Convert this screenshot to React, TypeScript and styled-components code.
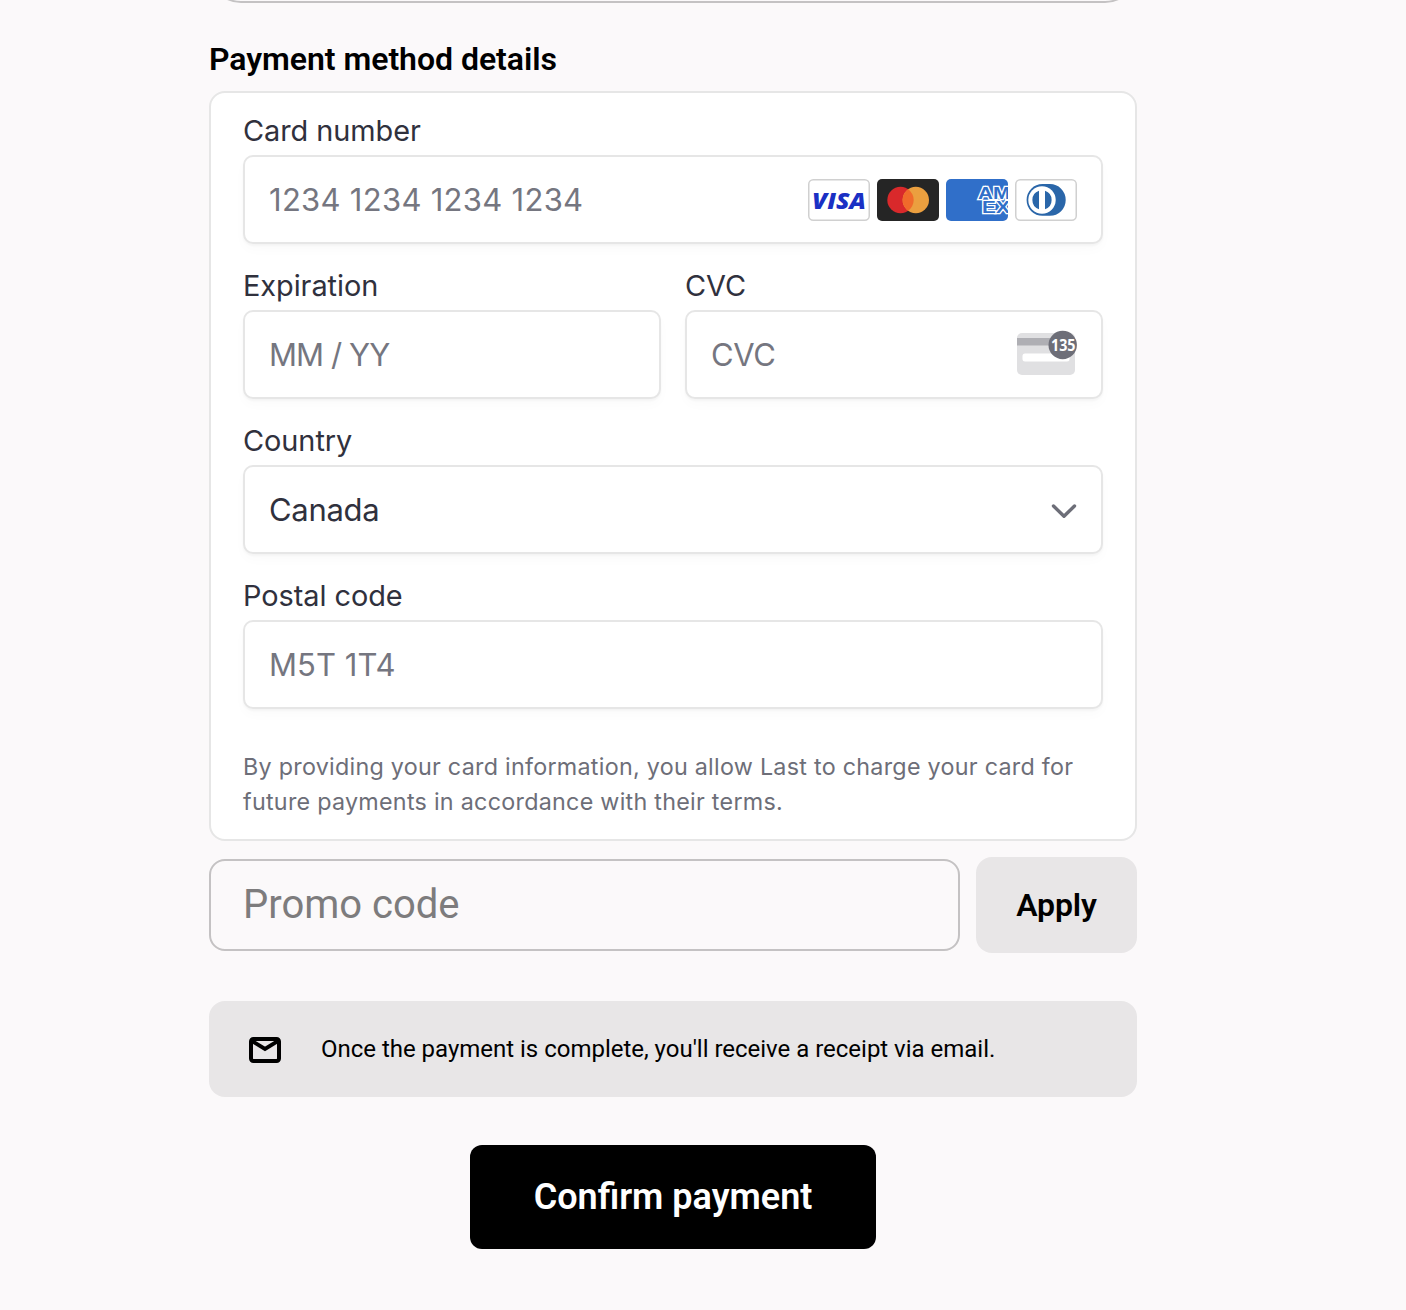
import React from "react";
import styled, { createGlobalStyle } from "styled-components";

const GlobalStyle = createGlobalStyle`
  *, *::before, *::after { box-sizing: border-box; }
  body {
    margin: 0;
    background: #fbf9fa;
    font-family: Roboto, "Liberation Sans", sans-serif;
    color: #000;
    overflow: hidden;
  }
`;

const Page = styled.main`
  width: 928px;
  margin-left: 209px;
  height: 1310px;
  display: flex;
  flex-direction: column;
`;

const PreviousField = styled.div`
  height: 3px;
  flex: none;
  display: flex;
  align-items: flex-end;
  overflow: hidden;
  &::after {
    content: "";
    flex: 1;
    height: 92px;
    border: 2px solid #c4c2c3;
    border-radius: 32px;
  }
`;

const Heading = styled.h2`
  margin: 37px 0 13px;
  font-size: 32px;
  line-height: 38px;
  font-weight: 600;
  letter-spacing: -0.04px;
  white-space: nowrap;
`;

const Card = styled.section`
  height: 750px;
  padding: 20px 32px 0;
  background: #fff;
  border: 2px solid #e6e6e6;
  border-radius: 16px;
  font-family: Inter, "Liberation Sans", sans-serif;
`;

const Rows = styled.div`
  display: flex;
  flex-direction: column;
  gap: 24px;
`;

const Columns = styled.div`
  display: grid;
  grid-template-columns: 1fr 1fr;
  gap: 24px;
`;

const Group = styled.div`
  display: flex;
  flex-direction: column;
`;

const Label = styled.label`
  height: 42px;
  line-height: 36px;
  font-size: 28.9px;
  letter-spacing: -0.05px;
  color: #30313d;
  white-space: nowrap;
`;

const Field = styled.div`
  height: 89px;
  display: flex;
  align-items: center;
  justify-content: space-between;
  padding: 0 24px;
  border: 2px solid #e6e6e6;
  border-radius: 10px;
  background: #fff;
  box-shadow: 0 2px 2px rgba(0, 0, 0, 0.03), 0 6px 12px rgba(0, 0, 0, 0.02);
`;

const Value = styled.span<{ $filled?: boolean; $spacing?: number }>`
  font-size: 31px;
  line-height: 40px;
  letter-spacing: ${(p) => p.$spacing ?? 0}px;
  color: ${(p) => (p.$filled ? "#30313d" : "#757680")};
  white-space: nowrap;
`;

const Brands = styled.div`
  display: flex;
  gap: 7px;
`;

const Terms = styled.p`
  margin: 40px 0 0;
  font-size: 23.3px;
  line-height: 35px;
  letter-spacing: 0.27px;
  color: #6d6e78;
  white-space: nowrap;
`;

const PromoRow = styled.div`
  margin-top: 16px;
  display: flex;
  align-items: center;
  gap: 16px;
`;

const PromoField = styled.div`
  width: 751px;
  height: 92px;
  padding: 0 32px 2px;
  display: flex;
  align-items: center;
  border: 2px solid #c4c2c3;
  border-radius: 16px;
  font-size: 40px;
  color: #7d7c7d;
`;

const ApplyButton = styled.button`
  width: 161px;
  height: 96px;
  border: 0;
  border-radius: 16px;
  background: #e8e6e7;
  font: 600 32px Roboto, sans-serif;
  letter-spacing: -0.1px;
  color: #000;
  padding: 0;
`;

const Notice = styled.div`
  margin-top: 48px;
  height: 96px;
  padding-left: 40px;
  display: flex;
  align-items: center;
  gap: 40px;
  border-radius: 16px;
  background: #e8e6e7;
  font-size: 24px;
  letter-spacing: -0.015px;
  white-space: nowrap;
`;

const ConfirmButton = styled.button`
  margin-top: 48px;
  align-self: center;
  width: 406px;
  height: 104px;
  border: 0;
  border-radius: 12px;
  background: #000;
  color: #fff;
  font: 600 36px Roboto, sans-serif;
  padding: 0;
`;

const CvcSvg = styled.svg`
  margin-bottom: 3px;
`;

const ChevronSvg = styled.svg`
  margin-top: 3px;
`;

const MailSvg = styled.svg`
  margin-top: 2px;
`;

const Visa = () => (
  <svg width="62" height="42" viewBox="0 0 62 42">
    <rect x="0.75" y="0.75" width="60.5" height="40.5" rx="4.5" fill="#fff" stroke="#d0d0d0" strokeWidth="1.5" />
    <text x="4" y="29.6" fontFamily="Open Sans" fontSize="23" fontWeight="800" fontStyle="italic" fill="#1a30c4" textLength="54" lengthAdjust="spacingAndGlyphs">VISA</text>
  </svg>
);

const Mastercard = () => (
  <svg width="62" height="42" viewBox="0 0 62 42">
    <rect width="62" height="42" rx="5" fill="#252525" />
    <circle cx="23.5" cy="21" r="13.2" fill="#d9292b" />
    <circle cx="38.8" cy="21" r="13.2" fill="#eb9f3f" />
    <path d="M31.15 10.25a13.2 13.2 0 0 1 0 21.5a13.2 13.2 0 0 1 0-21.5z" fill="#f06a2b" />
  </svg>
);

const Amex = () => (
  <svg width="62" height="42" viewBox="0 0 62 42">
    <clipPath id="amex"><rect width="62" height="42" rx="5" /></clipPath>
    <g clipPath="url(#amex)">
      <rect width="62" height="42" fill="#306fc9" />
      <g transform="scale(1.22 1)" fontFamily="Liberation Sans" fontWeight="700" fontSize="17" fill="#306fc9" stroke="#fff" strokeWidth="2.3" paintOrder="stroke" strokeLinejoin="miter">
        <text>
          <tspan x="26.2" y="20.200">AM</tspan>
          <tspan x="29.600" y="34.3">EX</tspan>
        </text>
      </g>
    </g>
  </svg>
);

const Diners = () => (
  <svg width="62" height="42" viewBox="0 0 62 42">
    <rect x="0.75" y="0.75" width="60.5" height="40.5" rx="4.5" fill="#fff" stroke="#d0d0d0" strokeWidth="1.5" />
    <path d="M27.5 5h7.400a15.8 15.9 0 0 1 0 31.8h-7.400a15.9 15.9 0 0 1 0-31.8z" fill="#2a66a9" />
    <circle cx="27" cy="21" r="13.7" fill="#fff" />
    <path d="M24 11.8v18.4a9.7 9.7 0 0 1 0-18.4zM30 11.8v18.4a9.7 9.7 0 0 0 0-18.4z" fill="#2a66a9" />
  </svg>
);

const CvcIcon = () => (
  <CvcSvg width="60" height="48" viewBox="0 0 60 48">
    <rect y="4" width="58" height="42" rx="5" fill="#e0e0e2" />
    <rect y="9" width="58" height="7.5" fill="#afafb4" />
    <rect x="5.5" y="24.5" width="47" height="8" rx="2.5" fill="#fff" />
    <circle cx="45.7" cy="16" r="14.2" fill="#6d6e78" />
    <text x="34" y="21.8" fontFamily="Noto Sans" fontSize="16" fontWeight="700" fill="#fff" textLength="24.5" lengthAdjust="spacingAndGlyphs">135</text>
  </CvcSvg>
);

const Chevron = () => (
  <ChevronSvg width="26" height="16" viewBox="0 0 26 16">
    <path d="M2.5 3L13 13.300L23.5 3" fill="none" stroke="#6d6e78" strokeWidth="3.4" strokeLinecap="round" strokeLinejoin="round" />
  </ChevronSvg>
);

const MailIcon = () => (
  <MailSvg width="32" height="26" viewBox="0 0 32 26">
    <rect x="2" y="2" width="28" height="22" rx="2.4" fill="none" stroke="#000" strokeWidth="4" />
    <path d="M2 3.4L16 12L30 3.4" fill="none" stroke="#000" strokeWidth="4" />
  </MailSvg>
);

export default function App() {
  return (
    <>
      <GlobalStyle />
      <Page>
        <PreviousField />
        <Heading>Payment method details</Heading>
        <Card>
          <Rows>
            <Group>
              <Label>Card number</Label>
              <Field>
                <Value $spacing={0.29}>1234 1234 1234 1234</Value>
                <Brands>
                  <Visa />
                  <Mastercard />
                  <Amex />
                  <Diners />
                </Brands>
              </Field>
            </Group>
            <Columns>
              <Group>
                <Label>Expiration</Label>
                <Field><Value $spacing={-0.9}>MM / YY</Value></Field>
              </Group>
              <Group>
                <Label>CVC</Label>
                <Field><Value $spacing={-0.35}>CVC</Value><CvcIcon /></Field>
              </Group>
            </Columns>
            <Group>
              <Label>Country</Label>
              <Field><Value $filled $spacing={-0.3}>Canada</Value><Chevron /></Field>
            </Group>
            <Group>
              <Label>Postal code</Label>
              <Field><Value $spacing={0.05}>M5T 1T4</Value></Field>
            </Group>
          </Rows>
          <Terms>
            By providing your card information, you allow Last to charge your card for
            <br />
            future payments in accordance with their terms.
          </Terms>
        </Card>
        <PromoRow>
          <PromoField>Promo code</PromoField>
          <ApplyButton>Apply</ApplyButton>
        </PromoRow>
        <Notice>
          <MailIcon />
          <span>Once the payment is complete, you'll receive a receipt via email.</span>
        </Notice>
        <ConfirmButton>Confirm payment</ConfirmButton>
      </Page>
    </>
  );
}
